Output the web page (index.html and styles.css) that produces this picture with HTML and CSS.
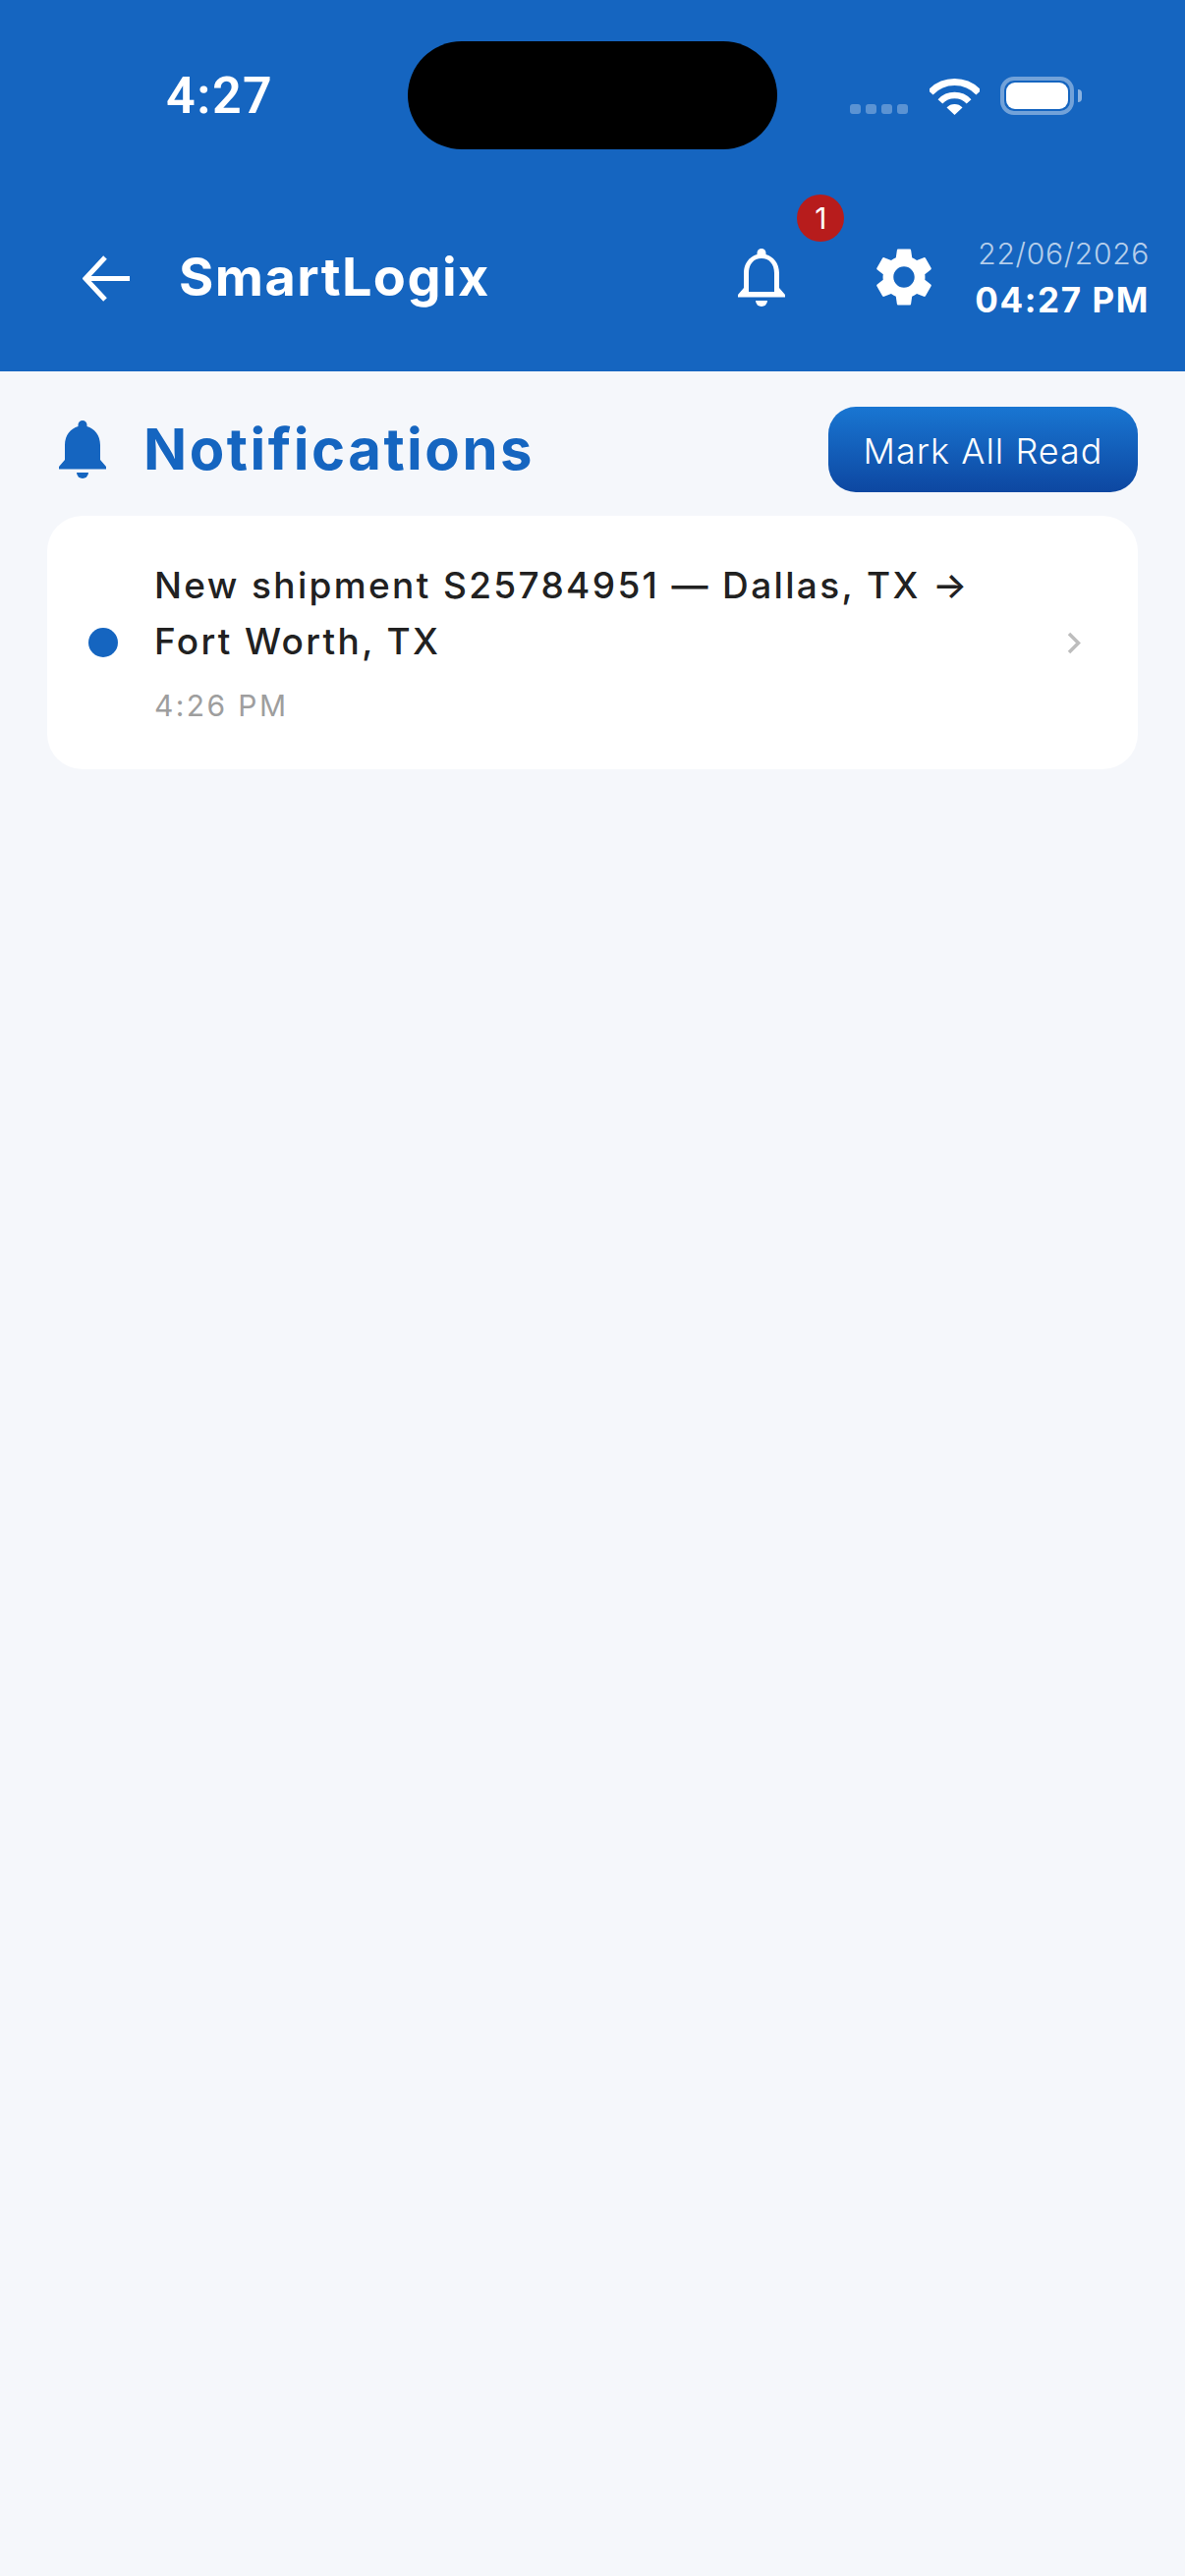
FILE: index.html
```html
<!DOCTYPE html>
<html lang="en">
<head>
  <meta charset="UTF-8">
  <title>Notifications</title>
  <link rel="stylesheet" href="styles.css">
</head>
<body>
  <header class="header">
    <div class="status-bar">
      <div class="status-time">4:27</div>
      <div class="notch"></div>
      <div class="status-icons">
        <div class="signal">
          <span></span><span></span><span></span><span></span>
        </div>
        <svg class="wifi" viewBox="0 0 51 37" width="51" height="37">
          <path d="M1 14.2A33.5 33.5 0 0 1 50 14.2" fill="none" stroke="#fff" stroke-width="7"/>
          <path d="M10.9 23.4A20 20 0 0 1 40.1 23.4" fill="none" stroke="#fff" stroke-width="6.5"/>
          <path d="M25.5 37L17.5 29.5A11 11 0 0 1 33.5 29.5Z" fill="#fff"/>
        </svg>
        <div class="battery"><div class="battery-level"></div></div>
      </div>
    </div>

    <div class="app-bar">
      <svg class="back" viewBox="0 0 48 47" width="48" height="47">
        <path d="M48 23.5H4M23 2L3 23.5 23 45" fill="none" stroke="#fff" stroke-width="5"/>
      </svg>
      <div class="app-title">SmartLogix</div>
      <div class="app-actions">
        <div class="bell-button">
          <svg viewBox="0 0 48 59" width="48" height="59">
            <path fill="#fff" fill-rule="evenodd" d="M24 0a4.5 4.5 0 0 1 4.5 4.5V6C36 8 42 15 42 25V40L48 47V49.5H0V47L6 40V25C6 15 12 8 19.5 6V4.5A4.5 4.5 0 0 1 24 0ZM11 44H37V25C37 16 32 10 24 10S11 16 11 25Z"/>
            <path fill="#fff" d="M18 53H30A6 6 0 0 1 18 53Z"/>
          </svg>
          <span class="badge">1</span>
        </div>
        <svg class="gear" viewBox="2.6 2 18.8 20" width="56" height="60">
          <path fill="#fff" d="M19.14 12.94c.04-.3.06-.61.06-.94 0-.32-.02-.64-.07-.94l2.03-1.58c.18-.14.23-.41.12-.61l-1.92-3.32c-.12-.22-.37-.29-.59-.22l-2.39.96c-.5-.38-1.03-.7-1.62-.94l-.36-2.54c-.04-.24-.24-.41-.48-.41h-3.84c-.24 0-.43.17-.47.41l-.36 2.54c-.59.24-1.13.57-1.62.94l-2.39-.96c-.22-.08-.47 0-.59.22L2.74 8.87c-.12.21-.08.47.12.61l2.03 1.58c-.05.3-.09.63-.09.94s.02.64.07.94l-2.03 1.58c-.18.14-.23.41-.12.61l1.92 3.32c.12.22.37.29.59.22l2.39-.96c.5.38 1.03.7 1.62.94l.36 2.54c.05.24.24.41.48.41h3.84c.24 0 .44-.17.47-.41l.36-2.54c.59-.24 1.13-.56 1.62-.94l2.39.96c.22.08.47 0 .59-.22l1.92-3.32c.12-.22.07-.47-.12-.61l-2.01-1.58zM12 15.6c-1.98 0-3.6-1.62-3.6-3.6s1.62-3.6 3.6-3.6 3.6 1.62 3.6 3.6-1.62 3.6-3.6 3.6z"/>
        </svg>
        <div class="clock">
          <div class="clock-date">22/06/2026</div>
          <div class="clock-time">04:27 PM</div>
        </div>
      </div>
    </div>
  </header>

  <main class="content">
    <div class="section-head">
      <div class="section-title">
        <svg viewBox="0 0 48 59" width="48" height="59">
          <path fill="#1565c0" d="M24 0a4.5 4.5 0 0 1 4.5 4.5V6C36 8 42 15 42 25V40L48 47V49.5H0V47L6 40V25C6 15 12 8 19.5 6V4.5A4.5 4.5 0 0 1 24 0Z"/>
          <path fill="#1565c0" d="M18 53H30A6 6 0 0 1 18 53Z"/>
        </svg>
        <h1>Notifications</h1>
      </div>
      <button class="mark-read">Mark All Read</button>
    </div>

    <div class="card">
      <span class="unread-dot"></span>
      <div class="card-text">
        <div class="card-message">New shipment S25784951 — Dallas, TX → Fort Worth, TX</div>
        <div class="card-time">4:26 PM</div>
      </div>
      <svg class="chevron" viewBox="0 0 14 23" width="14" height="23">
        <path d="M2 2L11.5 11.5 2 21" fill="none" stroke="#bdbdbd" stroke-width="3.5"/>
      </svg>
    </div>
  </main>
</body>
</html>
```

FILE: styles.css
```css
* {
  box-sizing: border-box;
}

html, body {
  height: 100%;
}

body {
  margin: 0;
  background-color: #f5f7fb;
  font-family: Inter, "Noto Sans", sans-serif;
}

.header {
  height: 378px;
  background-color: #1565c0;
  color: white;
}

.status-bar {
  display: grid;
  grid-template-columns: 415px 376px 1fr;
  height: 190px;
}

.status-time {
  padding: 65px 0 0 169px;
  font-family: Roboto, sans-serif;
  font-size: 52px;
  font-weight: 600;
  letter-spacing: 1.5px;
  line-height: 66px;
}

.notch {
  height: 110px;
  margin-top: 42px;
  background-color: black;
  border-radius: 55px;
}

.status-icons {
  display: flex;
  align-items: flex-end;
  height: 117px;
  padding-left: 74px;
}

.signal {
  display: flex;
  gap: 5px;
  margin-right: 22px;
  margin-bottom: 1px;
}

.signal span {
  width: 11px;
  height: 10px;
  background-color: rgba(255,255,255,0.3);
  border-radius: 3px;
}

.wifi {
  margin-right: 21px;
}

.battery {
  position: relative;
  width: 75px;
  height: 39px;
  padding: 2px;
  border: 4px solid rgba(255,255,255,0.4);
  border-radius: 14px;
}

.battery::after {
  content: "";
  position: absolute;
  top: 9px;
  left: 75px;
  width: 4px;
  height: 13px;
  background-color: rgba(255,255,255,0.5);
  border-radius: 0 4px 4px 0;
}

.battery-level {
  height: 100%;
  background-color: white;
  border-radius: 9px;
}

.app-bar {
  display: flex;
  align-items: center;
  height: 188px;
  padding: 0 36px 0 84px;
}

.back {
  margin-top: -1px;
}

.app-title {
  margin-left: 50px;
  margin-top: -6px;
  font-size: 54px;
  font-weight: 700;
  letter-spacing: 1.4px;
}

.app-actions {
  display: flex;
  align-items: center;
  margin-left: auto;
}

.bell-button {
  position: relative;
  height: 59px;
  margin-top: -3px;
  margin-right: 93px;
}

.bell-button svg,
.section-title svg {
  display: block;
}

.badge {
  position: absolute;
  top: -55px;
  left: 60px;
  width: 48px;
  height: 48px;
  background-color: #b71c1c;
  border-radius: 50%;
  font-size: 30px;
  line-height: 48px;
  text-align: center;
}

.gear {
  margin-top: -5px;
  margin-right: 44px;
}

.clock {
  margin-top: -3px;
  text-align: right;
}

.clock-date {
  font-size: 30px;
  font-weight: 300;
  letter-spacing: 0.7px;
  line-height: 36px;
  color: rgba(255,255,255,0.7);
}

.clock-time {
  margin-top: 9px;
  font-size: 35px;
  font-weight: 700;
  letter-spacing: 1.6px;
  line-height: 40px;
}

.content {
  padding: 36px 48px 0;
}

.section-head {
  display: flex;
  align-items: center;
  justify-content: space-between;
}

.section-title {
  display: flex;
  align-items: center;
  gap: 38px;
  padding-left: 12px;
}

.section-title h1 {
  margin: -2px 0 0;
  font-size: 58px;
  font-weight: 700;
  letter-spacing: 2.5px;
  color: #1565c0;
}

.mark-read {
  width: 315px;
  height: 87px;
  padding: 2px 0 0;
  border: none;
  border-radius: 28px;
  background: linear-gradient(to bottom, #1976d2, #0d47a1);
  color: white;
  font-family: Inter, sans-serif;
  font-size: 36px;
  font-weight: 300;
  letter-spacing: 1px;
}

.card {
  display: flex;
  align-items: center;
  height: 258px;
  margin-top: 24px;
  padding: 0 58px 0 42px;
  background-color: white;
  border-radius: 36px;
}

.unread-dot {
  flex: none;
  width: 30px;
  height: 30px;
  margin-right: 37px;
  background-color: #1565c0;
  border-radius: 50%;
}

.card-text {
  flex: 1;
  padding-right: 60px;
  padding-bottom: 6px;
}

.card-message {
  font-size: 37px;
  font-weight: 500;
  line-height: 57px;
  letter-spacing: 2.35px;
  color: #212121;
}

.card-time {
  margin-top: 19px;
  font-size: 30px;
  letter-spacing: 2.4px;
  color: #9e9e9e;
}

.chevron {
  flex: none;
}
```
